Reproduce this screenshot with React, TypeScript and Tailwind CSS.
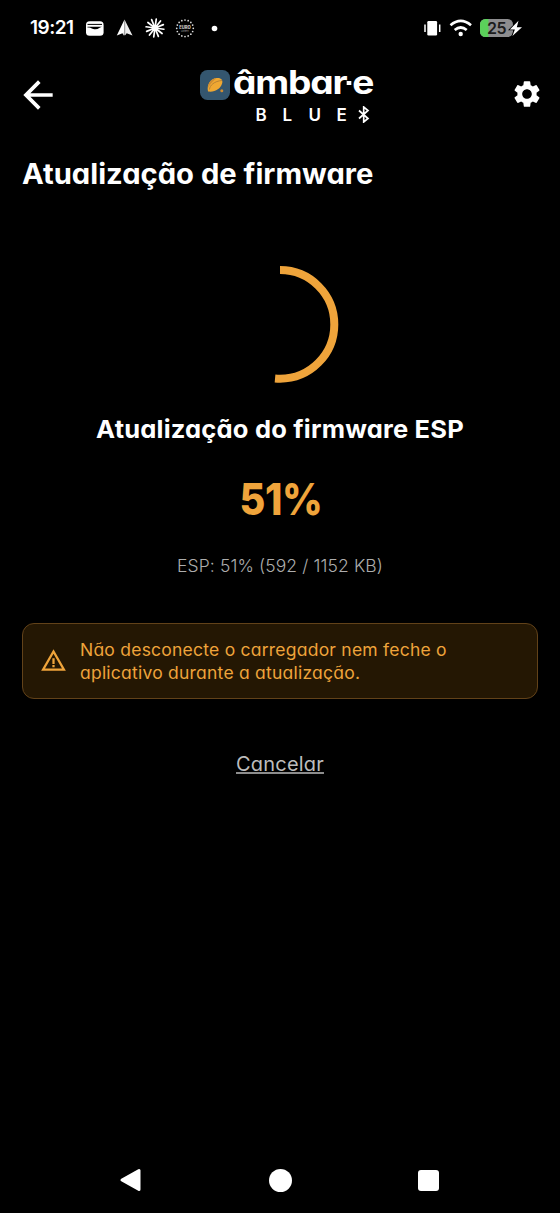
import React from 'react';
import { MdArrowBack, MdSettings, MdWarningAmber } from 'react-icons/md';

const PROGRESS = 51.4;
const RADIUS = 54.3;

function TrayIcons() {
  const rays = Array.from({ length: 12 }, (_, i) => i * 30 + 8);
  const stars = Array.from({ length: 16 }, (_, i) => (i * Math.PI) / 8);
  return (
    <svg width="136" height="24" viewBox="84 16 136 24" className="ml-[9px]">
      <rect x="86" y="21.3" width="17.6" height="14.5" rx="3.6" fill="#fff" />
      <path d="M87.500 24.400h14.500" stroke="#000" strokeWidth="1" />
      <path d="M87.500 26.700h14.500c-2 .3-3.200 2.500-6.600 2.500s-4-2-7.900-1.800z" fill="#000" />
      <path d="M124.500 19.500l-7.700 16 5.700-2.300 1.300 2.600z" fill="#fff" />
      <path d="M124.500 19.500l8 16-5.800-2.300-2 2.600z" fill="#eee" />
      <path d="M124.700 22v13" stroke="#aaa" strokeWidth="1.200" />
      <g stroke="#fff" strokeWidth="1.700" strokeLinecap="round">
        {rays.map((a) => (
          <path key={a} d="M155 28V19" transform={`rotate(${a} 155 28)`} />
        ))}
      </g>
      <circle cx="155" cy="28" r="3.300" fill="#fff" />
      {stars.map((a) => (
        <circle key={a} cx={185 + 8.300 * Math.cos(a)} cy={28.300 + 8.300 * Math.sin(a)} r=".85" fill="#ddd" />
      ))}
      <text x="185" y="29.100" textAnchor="middle" fontSize="4.200" fontWeight="800" fill="#ccc" fontFamily="Inter">EURO</text>
      <text x="185" y="32" textAnchor="middle" fontSize="2.400" fill="#aaa" fontFamily="Inter">Lottery</text>
      <circle cx="214.500" cy="28.500" r="2.800" fill="#fff" />
    </svg>
  );
}

function SystemIcons() {
  return (
    <svg width="104" height="24" viewBox="422 16 104 24">
      <rect x="427.300" y="21" width="9.800" height="14.500" rx="1.200" fill="#fff" />
      <path d="M425 24.500v7.500M439.700 24.500v7.500" stroke="#fff" strokeWidth="1.500" />
      <g fill="none" stroke="#fff" strokeWidth="2.700">
        <path d="M450.500 25.200q10.200-8.600 20.500 0" />
        <path d="M454.700 30q6-5 12 0" />
      </g>
      <circle cx="460.700" cy="34" r="2.200" fill="#fff" />
      <clipPath id="cell"><rect x="480" y="19" width="33" height="18" rx="5.500" /></clipPath>
      <g clipPath="url(#cell)">
        <rect x="480" y="19" width="33" height="18" fill="#8d8d8f" />
        <rect x="480" y="19" width="8.500" height="18" fill="#5bd05b" />
      </g>
      <text x="496.500" y="34" textAnchor="middle" fontSize="16" fontWeight="600" fill="#1c1c1c" fontFamily="Inter" letterSpacing="-.6">25</text>
      <path d="M518.500 20.800l-8.600 8.700h5l-2.500 6.500 9.600-8.800h-5.200z" fill="#fff" stroke="#000" strokeWidth="1.600" paintOrder="stroke" />
    </svg>
  );
}

function Brand() {
  return (
    <div className="flex w-[174px] flex-col">
      <div className="flex h-[30px] items-center">
        <svg width="30" height="30" viewBox="0 0 30 30" className="shrink-0">
          <rect width="30" height="30" rx="7.500" fill="#34566f" />
          <path d="M8 21.500c-1.500-7 2.500-12.500 8.500-13.500 4.500-.6 6.800 2 5.600 5.500C20.500 18.800 15 22.500 8 21.500z" fill="#efa832" />
          <path d="M9.500 19.500c0-4 5-8.500 12.500-9" stroke="#b98232" strokeWidth="1" fill="none" />
          <path d="M8 18c0-6 4-9.500 8.500-10-2 2-5 4-8.500 10z" fill="#cf8d32" />
          <circle cx="21.800" cy="20.700" r="1.500" fill="#cf8d32" />
        </svg>
        <div className="mb-[4px] ml-[3px] flex origin-left scale-x-[1.160] items-center text-[32px] leading-[30px] font-bold tracking-[-1px] whitespace-nowrap">
          <span>âmbar</span>
          <span className="mt-[1px] mr-[1px] size-[4px] bg-white" />
          <span>e</span>
        </div>
      </div>
      <div className="mt-[3px] ml-[56px] flex h-[24px] items-center text-[17px] leading-6 font-semibold">
        <span className="w-[27px]">B</span>
        <span className="w-[26px]">L</span>
        <span className="w-[28px]">U</span>
        <span className="w-[21px]">E</span>
        <svg width="12" height="17" viewBox="0 0 12 17" fill="none" stroke="#fff" strokeWidth="1.700">
          <path d="M1 4.500l9 8-4.300 3.500V1L10 4.500l-9 8" />
        </svg>
      </div>
    </div>
  );
}

export default function App() {
  const circumference = 2 * Math.PI * RADIUS;
  return (
    <div className="flex h-[1213px] w-[560px] flex-col overflow-hidden bg-black font-['Inter',sans-serif] text-white [font-feature-settings:'cv11']">
      <div className="flex h-14 items-center justify-between pr-[34px] pl-[30px]">
        <div className="flex items-center">
          <span className="w-[45px] text-[19px] leading-6 font-semibold tracking-[-0.500px]">19:21</span>
          <TrayIcons />
        </div>
        <SystemIcons />
      </div>

      <header className="flex h-[77px] items-center justify-between pr-[17px] pl-[16px]">
        <button aria-label="Voltar" className="w-[60px]"><MdArrowBack size={44} /></button>
        <div className="pt-[7px] pl-[14px]"><Brand /></div>
        <button aria-label="Configurações" className="flex w-[60px] justify-end"><MdSettings size={32} className="mb-[1px]" /></button>
      </header>

      <main className="flex flex-1 flex-col px-[22px]">
        <h1 className="mt-[21px] origin-left scale-x-[1.042] text-[28px] leading-10 font-bold whitespace-nowrap">Atualização de firmware</h1>
        <svg width="120" height="120" viewBox="0 0 120 120" className="mt-[70px] self-center">
          <circle
            cx="60" cy="60.400" r={RADIUS} fill="none" stroke="#efa43b" strokeWidth="8"
            strokeDasharray={`${(circumference * PROGRESS) / 100} ${circumference}`}
            transform="rotate(-90 60 60.4)"
          />
        </svg>
        <h2 className="mt-[27px] scale-x-[1.042] text-center text-[24.500px] leading-9 font-bold tracking-[0.180px] whitespace-nowrap">Atualização do firmware ESP</h2>
        <p className="mt-[26px] scale-x-[0.900] pl-[2px] text-center text-[44px] leading-[52px] font-extrabold tracking-[-0.500px] text-[#efa43b]">51%</p>
        <p className="mt-[27px] text-center text-[17.500px] leading-7 font-light tracking-[0.120px] whitespace-nowrap text-[#adadad]">ESP: 51% (592 / 1152 KB)</p>
        <div className="mt-[43px] flex h-[76px] items-center rounded-[12px] border border-[#624219] bg-[#241703] pl-[17px] text-[#efa43b]">
          <MdWarningAmber size={27} className="mb-[2px] shrink-0" />
          <p className="mt-[1px] ml-[13px] origin-left scale-x-[1.030] text-[17px] leading-[23px] tracking-[0.220px] whitespace-nowrap">
            Não desconecte o carregador nem feche o<br />aplicativo durante a atualização.
          </p>
        </div>
        <button className="mt-[51px] self-center text-[20px] leading-7 tracking-[0.200px] text-[#bdbdbd] underline decoration-[#8d8d8d] underline-offset-1">Cancelar</button>
      </main>

      <nav className="flex h-[66px] items-center justify-between pr-[121px] pl-[119px]">
        <svg width="23" height="24" viewBox="0 0 23 24"><path d="M3 12L20 2.500v19z" fill="#fff" stroke="#fff" strokeWidth="3" strokeLinejoin="round" /></svg>
        <span className="size-[23px] rounded-full bg-white" />
        <span className="size-[21px] rounded-[3px] bg-white" />
      </nav>
    </div>
  );
}
